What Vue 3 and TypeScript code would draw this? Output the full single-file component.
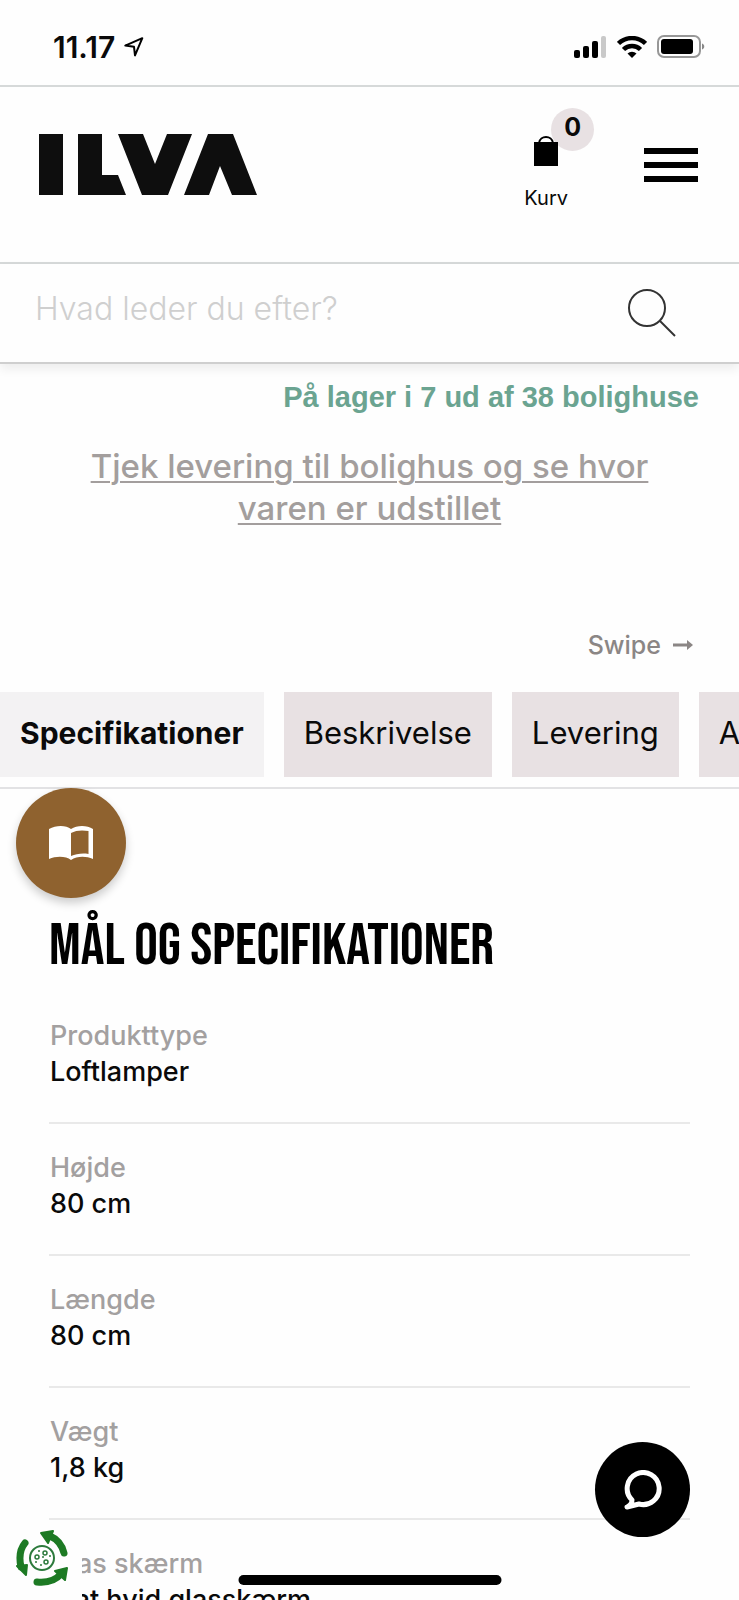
<script setup lang="ts">
import { ref } from 'vue'

interface Spec {
  label: string
  value: string
}

const query = ref('')
const cartCount = ref(0)
const tabs: string[] = ['Specifikationer', 'Beskrivelse', 'Levering', 'Anmeldelser']
const activeTab = ref(tabs[0])

const specs: Spec[] = [
  { label: 'Produkttype', value: 'Loftlamper' },
  { label: 'Højde', value: '80 cm' },
  { label: 'Længde', value: '80 cm' },
  { label: 'Vægt', value: '1,8 kg' },
  { label: 'Glas skærm', value: 'Mat hvid glasskærm' },
]
</script>

<template>
  <div class="screen">
    <div class="status">
      <div class="clock">
        <span>11.17</span>
        <svg width="20" height="20" viewBox="0 0 20 20" aria-hidden="true">
          <path d="M1.3 8.6 18.3 1.2 11 18.4 10 9.8Z" fill="none" stroke="#000" stroke-width="2" stroke-linejoin="round" />
        </svg>
      </div>
      <div class="signals">
        <svg width="33" height="22" viewBox="0 0 33 22" aria-hidden="true">
          <rect x="0" y="14" width="6" height="8" rx="2" />
          <rect x="9" y="10" width="6" height="12" rx="2" />
          <rect x="18" y="5" width="6" height="17" rx="2" />
          <rect x="27" y="0" width="5" height="22" rx="2" fill="#c9c9c9" />
        </svg>
        <svg width="30" height="22" viewBox="0 0 30 22" aria-hidden="true">
          <path d="M1.5 7.5A19.5 19.5 0 0 1 28.5 7.5" fill="none" stroke="#000" stroke-width="4.5" />
          <path d="M6.5 13.5A12 12 0 0 1 23.5 13.5" fill="none" stroke="#000" stroke-width="4.5" />
          <path d="M10.5 17.5a6.5 6.5 0 0 1 9 0L15 22Z" />
        </svg>
        <svg width="48" height="24" viewBox="0 0 48 24" aria-hidden="true">
          <rect x="1" y="1" width="42" height="21" rx="6" fill="none" stroke="#979797" stroke-width="2" />
          <rect x="4" y="4" width="32" height="15" rx="3" />
          <path d="M45 8.5c3 1 3 5 0 6Z" fill="#888" />
        </svg>
      </div>
    </div>

    <header class="header">
      <a class="logo" href="#" aria-label="ILVA">
        <svg width="218" height="61" viewBox="0 0 218 61" fill="#0e0e0e" aria-hidden="true">
          <path d="M0 0H24V61H0Z" />
          <path d="M39 0H63V41H79L87 61H39Z" />
          <path d="M79 0H104L116 30 128 0H153L129 61H103Z" />
          <path d="M169 0H194L218 61H193L181 32 170 61H145Z" />
        </svg>
      </a>
      <a class="cart" href="#">
        <span class="bag">
          <svg width="24" height="30" viewBox="0 0 24 30" aria-hidden="true">
            <path d="M0 6H24V30H0Z" />
            <path d="M5 7C6 -1 18 -1 19 7Z" fill="#fff" stroke="#000" stroke-width="2" />
          </svg>
          <span class="badge">{{ cartCount }}</span>
        </span>
        <span class="cart-label">Kurv</span>
      </a>
      <button class="menu" type="button" aria-label="Menu">
        <span></span><span></span><span></span>
      </button>
    </header>

    <form class="search" role="search" @submit.prevent>
      <input v-model="query" type="text" placeholder="Hvad leder du efter?" aria-label="Hvad leder du efter?" />
      <button type="submit" aria-label="Søg">
        <svg width="50" height="50" viewBox="0 0 50 50" fill="none" stroke="#333" stroke-width="2" aria-hidden="true">
          <circle cx="20" cy="20" r="18" />
          <path d="M33 33 48 48" />
        </svg>
      </button>
    </form>

    <main>
      <p class="stock">På lager i 7 ud af 38 bolighuse</p>
      <p class="delivery"><a href="#">Tjek levering til bolighus og se hvor varen er udstillet</a></p>
      <p class="swipe">
        <span>Swipe</span>
        <svg width="20" height="10" viewBox="0 0 20 10" aria-hidden="true">
          <path d="M0 5H16" stroke="#8b8685" stroke-width="3" />
          <path d="M14 0 20 5 14 10Z" fill="#8b8685" />
        </svg>
      </p>

      <nav class="tabs">
        <button
          v-for="tab in tabs"
          :key="tab"
          type="button"
          :class="{ active: tab === activeTab }"
          @click="activeTab = tab"
        >{{ tab }}</button>
      </nav>

      <section class="specs">
        <h1>MÅL OG SPECIFIKATIONER</h1>
        <dl>
          <div v-for="spec in specs" :key="spec.label" class="row">
            <dt>{{ spec.label }}</dt>
            <dd>{{ spec.value }}</dd>
          </div>
        </dl>
      </section>
    </main>

    <button class="catalog" type="button" aria-label="Katalog">
      <svg width="44" height="34" viewBox="0 0 44 34" aria-hidden="true">
        <path d="M0 3C7-1 17-1 22 3C28-1 38-1 44 3V33C37 30 28 30 22 34C17 30 7 30 0 33Z" fill="#fff" />
        <path d="M22 7C27 4 34 4 39.5 5V28C33 27 27 28 22 30Z" fill="#8f622f" />
      </svg>
    </button>

    <button class="cookies" type="button" aria-label="Cookieindstillinger">
      <svg width="54" height="58" viewBox="0 0 54 58" aria-hidden="true">
        <g fill="none" stroke="#1d7a24" stroke-width="7" stroke-linecap="round">
          <path d="M48 24C46 16 41 10 34 7" />
          <path d="M9 14C4 20 3 29 5 38" />
          <path d="M21 53C31 54 39 52 45 45" />
        </g>
        <g fill="#1d7a24" stroke="#1d7a24" stroke-width="2" stroke-linejoin="round">
          <path d="M25 4 37 2 32 14Z" />
          <path d="M1 37 11 36 10 46Z" />
          <path d="M39 42 51 39 49 51Z" />
        </g>
        <circle cx="26" cy="29" r="12" fill="#fff" stroke="#2c7a3c" stroke-width="2" />
        <g fill="#fff" stroke="#2c7a3c" stroke-width="1.5">
          <circle cx="21" cy="28" r="2" />
          <circle cx="29" cy="24" r="2" />
          <circle cx="30" cy="33" r="2" />
        </g>
        <g fill="#2c7a3c">
          <circle cx="23" cy="22" r="1" />
          <circle cx="27" cy="28" r="1" />
          <circle cx="34" cy="27" r="1" />
          <circle cx="20" cy="33" r="1" />
          <circle cx="25" cy="36" r="1" />
        </g>
      </svg>
    </button>

    <button class="chat" type="button" aria-label="Chat">
      <svg width="38" height="40" viewBox="0 0 38 40" fill="none" stroke="#fff" stroke-width="5" stroke-linejoin="round" stroke-linecap="round" aria-hidden="true">
        <path d="M8 30A16 16 0 1 1 15 34L3 37Q8 35 8 30Z" />
      </svg>
    </button>

    <div class="home-bar"></div>
  </div>
</template>

<style>
body {
  margin: 0;
}
</style>

<style scoped>
.screen {
  position: relative;
  height: 100vh;
  overflow: hidden;
  background: #fefefe;
  color: #0a0a0a;
  font-family: Inter, "Liberation Sans", sans-serif;
}

button {
  border: 0;
  padding: 0;
  background: none;
  font: inherit;
  color: inherit;
  cursor: pointer;
}

svg {
  display: block;
}

.status {
  display: flex;
  justify-content: space-between;
  align-items: center;
  box-sizing: border-box;
  height: 87px;
  padding: 8px 34px 0 53px;
  border-bottom: 2px solid #d6d9d9;
}

.clock {
  display: flex;
  align-items: center;
  gap: 9px;
  font-size: 30px;
  font-weight: 600;
}

.signals {
  display: flex;
  align-items: center;
  gap: 10px;
}

.header {
  display: flex;
  align-items: flex-start;
  box-sizing: border-box;
  height: 177px;
  padding: 47px 41px 0 39px;
  border-bottom: 2px solid #d6d9d9;
}

.logo {
  margin-right: auto;
}

.cart {
  display: flex;
  flex-direction: column;
  align-items: center;
  gap: 17px;
  margin-right: 76px;
  padding-top: 2px;
  color: #0a0a0a;
  text-decoration: none;
}

.bag {
  position: relative;
  z-index: 0;
}

.badge {
  position: absolute;
  left: 17px;
  top: -28px;
  z-index: -1;
  width: 43px;
  height: 43px;
  border-radius: 50%;
  background: #e8e1e3;
  font-size: 25px;
  font-weight: 700;
  line-height: 38px;
  text-align: center;
}

.cart-label {
  font-size: 20px;
  line-height: 30px;
}

.menu {
  display: flex;
  flex-direction: column;
  gap: 8px;
  width: 54px;
  padding-top: 14px;
}

.menu span {
  height: 6px;
  background: #000;
}

.search {
  position: relative;
  display: flex;
  align-items: center;
  box-sizing: border-box;
  height: 100px;
  padding: 0 62px 0 35px;
  border-bottom: 2px solid #cfcfcf;
  box-shadow: 0 5px 10px rgba(0, 0, 0, 0.07);
}

.search input {
  flex: 1;
  min-width: 0;
  height: 60px;
  margin-bottom: 10px;
  padding: 0;
  border: 0;
  outline: 0;
  background: none;
  font: 300 32px Inter, "Liberation Sans", sans-serif;
}

.search input::placeholder {
  color: #cfcfcf;
  opacity: 1;
}

p {
  margin: 0;
}

.stock {
  padding: 15px 40px 0;
  color: #6ba491;
  font-family: "Liberation Sans", sans-serif;
  font-size: 29px;
  font-weight: 700;
  line-height: 36px;
  text-align: right;
}

.delivery {
  padding: 30px 70px 0;
  font-size: 33px;
  font-weight: 500;
  line-height: 42px;
  text-align: center;
}

.delivery a {
  color: #a39e9d;
  text-decoration-thickness: 2px;
  text-underline-offset: 3px;
}

.swipe {
  display: flex;
  justify-content: flex-end;
  align-items: center;
  gap: 12px;
  padding: 98px 46px 0 0;
  color: #8b8685;
  font-size: 25px;
  font-weight: 500;
  line-height: 36px;
}

.tabs {
  display: flex;
  gap: 20px;
  margin-top: 29px;
  padding-bottom: 10px;
  border-bottom: 2px solid #e2e2e4;
  overflow: hidden;
}

.tabs button {
  flex: none;
  height: 85px;
  padding: 0 20px 4px;
  background: #e8e1e3;
  font-size: 31px;
}

.tabs .active {
  background: #f3f2f3;
  font-size: 30px;
  font-weight: 700;
}

.specs {
  padding: 126px 49px 0;
}

h1 {
  margin: 0;
  color: #000;
  font-family: "Bebas Neue", "Liberation Sans", sans-serif;
  font-size: 59px;
  font-weight: 400;
  line-height: 64px;
}

dl {
  margin: 13px 0 0;
}

.row {
  padding: 26px 1px 32px;
  border-bottom: 2px solid #e9e9e9;
  font-size: 27px;
  font-weight: 500;
  line-height: 36px;
}

dt {
  color: #a3a0a0;
}

dd {
  margin: 0;
}

.catalog,
.chat {
  position: absolute;
  display: flex;
  align-items: center;
  justify-content: center;
  border-radius: 50%;
}

.catalog {
  left: 16px;
  top: 788px;
  width: 110px;
  height: 110px;
  background: #8f622f;
  box-shadow: 0 5px 10px rgba(0, 0, 0, 0.2);
}

.chat {
  right: 49px;
  bottom: 63px;
  width: 95px;
  height: 95px;
  background: #000;
}

.cookies {
  position: absolute;
  left: 0;
  bottom: 0;
  width: 82px;
  height: 80px;
  padding: 9px 0 13px 16px;
  background: #fefefe;
}

.home-bar {
  position: absolute;
  left: 50%;
  bottom: 15px;
  width: 263px;
  height: 10px;
  border-radius: 5px;
  background: #000;
  transform: translateX(-50%);
}
</style>
